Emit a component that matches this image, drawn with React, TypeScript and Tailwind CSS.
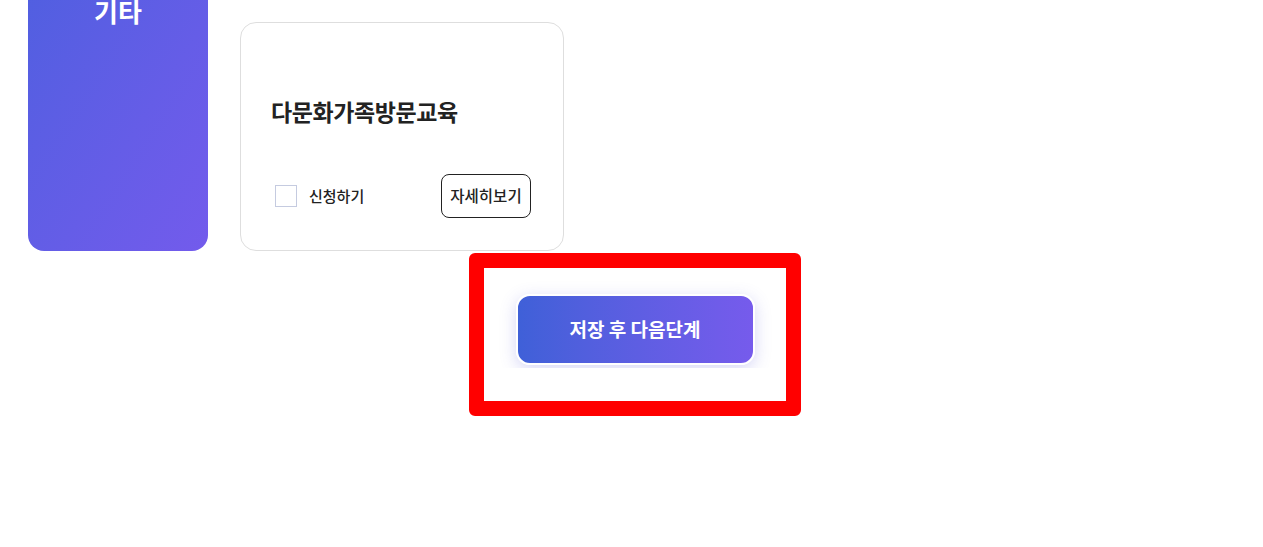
export default function App() {
  return (
    <div
      className="w-full min-h-[547px] bg-white overflow-hidden"
      style={{ fontFamily: '"Noto Sans CJK KR", "Noto Sans", sans-serif' }}
    >
      {/* 카테고리 + 카드 */}
      <div className="flex items-start gap-8 pl-7 -mt-[30px]">
        <div className="w-[180px] h-[281px] rounded-2xl bg-gradient-to-br from-[#4f5fe0] to-[#735bec] flex justify-center pt-[24px]">
          <span className="text-[26px] font-bold text-white leading-[34px]">기타</span>
        </div>

        <div className="mt-[52px] w-[324px] h-[229px] rounded-2xl border border-[#dedede] bg-white flex flex-col px-[30px]">
          <h3 className="mt-[70px] text-[23px] font-bold text-[#222] leading-[36px] tracking-[-0.4px]">
            다문화가족방문교육
          </h3>
          <div className="mt-auto mb-[32px] flex items-center justify-between">
            <label className="flex items-center gap-3 pl-[4px]">
              <span className="w-[22px] h-[22px] border border-[#c5cbe0] bg-white" />
              <span className="text-[15px] font-medium text-[#222]">신청하기</span>
            </label>
            <button className="w-[90px] h-[44px] rounded-lg border border-[#222] text-[15.5px] font-medium text-[#222] mr-[2px]">
              자세히보기
            </button>
          </div>
        </div>
      </div>

      {/* 저장 버튼 */}
      <div className="flex justify-center pl-[7px] mt-[2px]">
        <div className="w-[332px] h-[163px] border-[15px] border-[#ff0000] rounded-md flex justify-center">
          <div className="overflow-hidden px-[17px] pt-[26px] pb-[2px] h-[100px]">
            <button className="w-[239px] h-[71px] rounded-[14px] border-2 border-white bg-gradient-to-r from-[#3f60d8] to-[#765bec] text-white text-[19px] font-bold shadow-[0_4px_16px_rgba(90,90,220,0.25)]">
              저장 후 다음단계
            </button>
          </div>
        </div>
      </div>
    </div>
  );
}
